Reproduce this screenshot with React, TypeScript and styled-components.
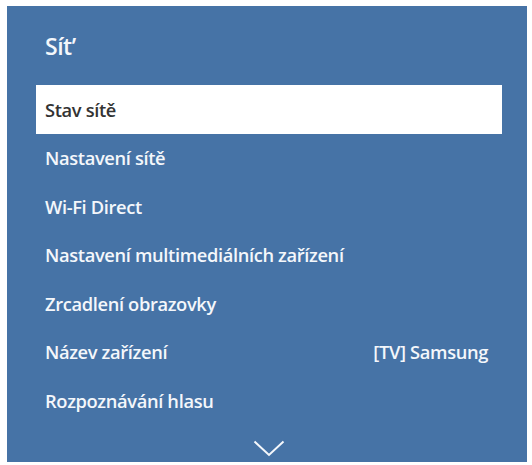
import {FC} from 'react'
import styled, {createGlobalStyle} from 'styled-components'

const items = [
  {label: 'Stav sítě', selected: true},
  {label: 'Nastavení sítě'},
  {label: 'Wi-Fi Direct'},
  {label: 'Nastavení multimediálních zařízení'},
  {label: 'Zrcadlení obrazovky'},
  {label: 'Název zařízení', value: '[TV] Samsung'},
  {label: 'Rozpoznávání hlasu'}
]

const App: FC = () => {
  return (
    <>
      <GlobalStyle />
      <Page>
        <Panel>
          <Title>Sít’</Title>
          <Menu>
            {items.map((item) => (
              <Row key={item.label} $selected={item.selected}>
                <span>{item.label}</span>
                {item.value && <Value>{item.value}</Value>}
              </Row>
            ))}
          </Menu>
          <More>
            <svg width="32" height="17" viewBox="0 0 32 17" fill="none">
              <path d="M1.5 1.5 L16 15 L30.5 1.5" stroke="#f4f7fb" strokeWidth="2" />
            </svg>
          </More>
        </Panel>
      </Page>
    </>
  )
}

const GlobalStyle = createGlobalStyle`
  body {
    margin: 0;
    background: #ffffff;
    font-family: "Open Sans", "Liberation Sans", sans-serif;
  }
`

const Page = styled.div`
  width: 532px;
  height: 465px;
  padding: 6px 5px 3px 7px;
  box-sizing: border-box;
`

const Panel = styled.div`
  height: 100%;
  background: #4673a6;
  display: flex;
  flex-direction: column;
  padding: 0 25px 0 29px;
`

const Title = styled.h1`
  margin: 0;
  height: 79px;
  display: flex;
  align-items: center;
  padding-left: 9px;
  font-size: 23px;
  font-weight: 600;
  letter-spacing: -0.5px;
  color: #f4f7fb;
`

const Menu = styled.div`
  display: flex;
  flex-direction: column;
`

const Row = styled.div<{$selected?: boolean}>`
  height: 48.5px;
  display: flex;
  align-items: center;
  justify-content: space-between;
  padding: 0 14px 0 9px;
  font-size: 18.3px;
  font-weight: 600;
  letter-spacing: -0.35px;
  color: ${(p) => (p.$selected ? '#333333' : '#f4f7fb')};
  background: ${(p) => (p.$selected ? '#ffffff' : 'transparent')};
`

const Value = styled.span``

const More = styled.div`
  flex: 1;
  display: flex;
  justify-content: center;
  padding-top: 15px;
`

export default App
